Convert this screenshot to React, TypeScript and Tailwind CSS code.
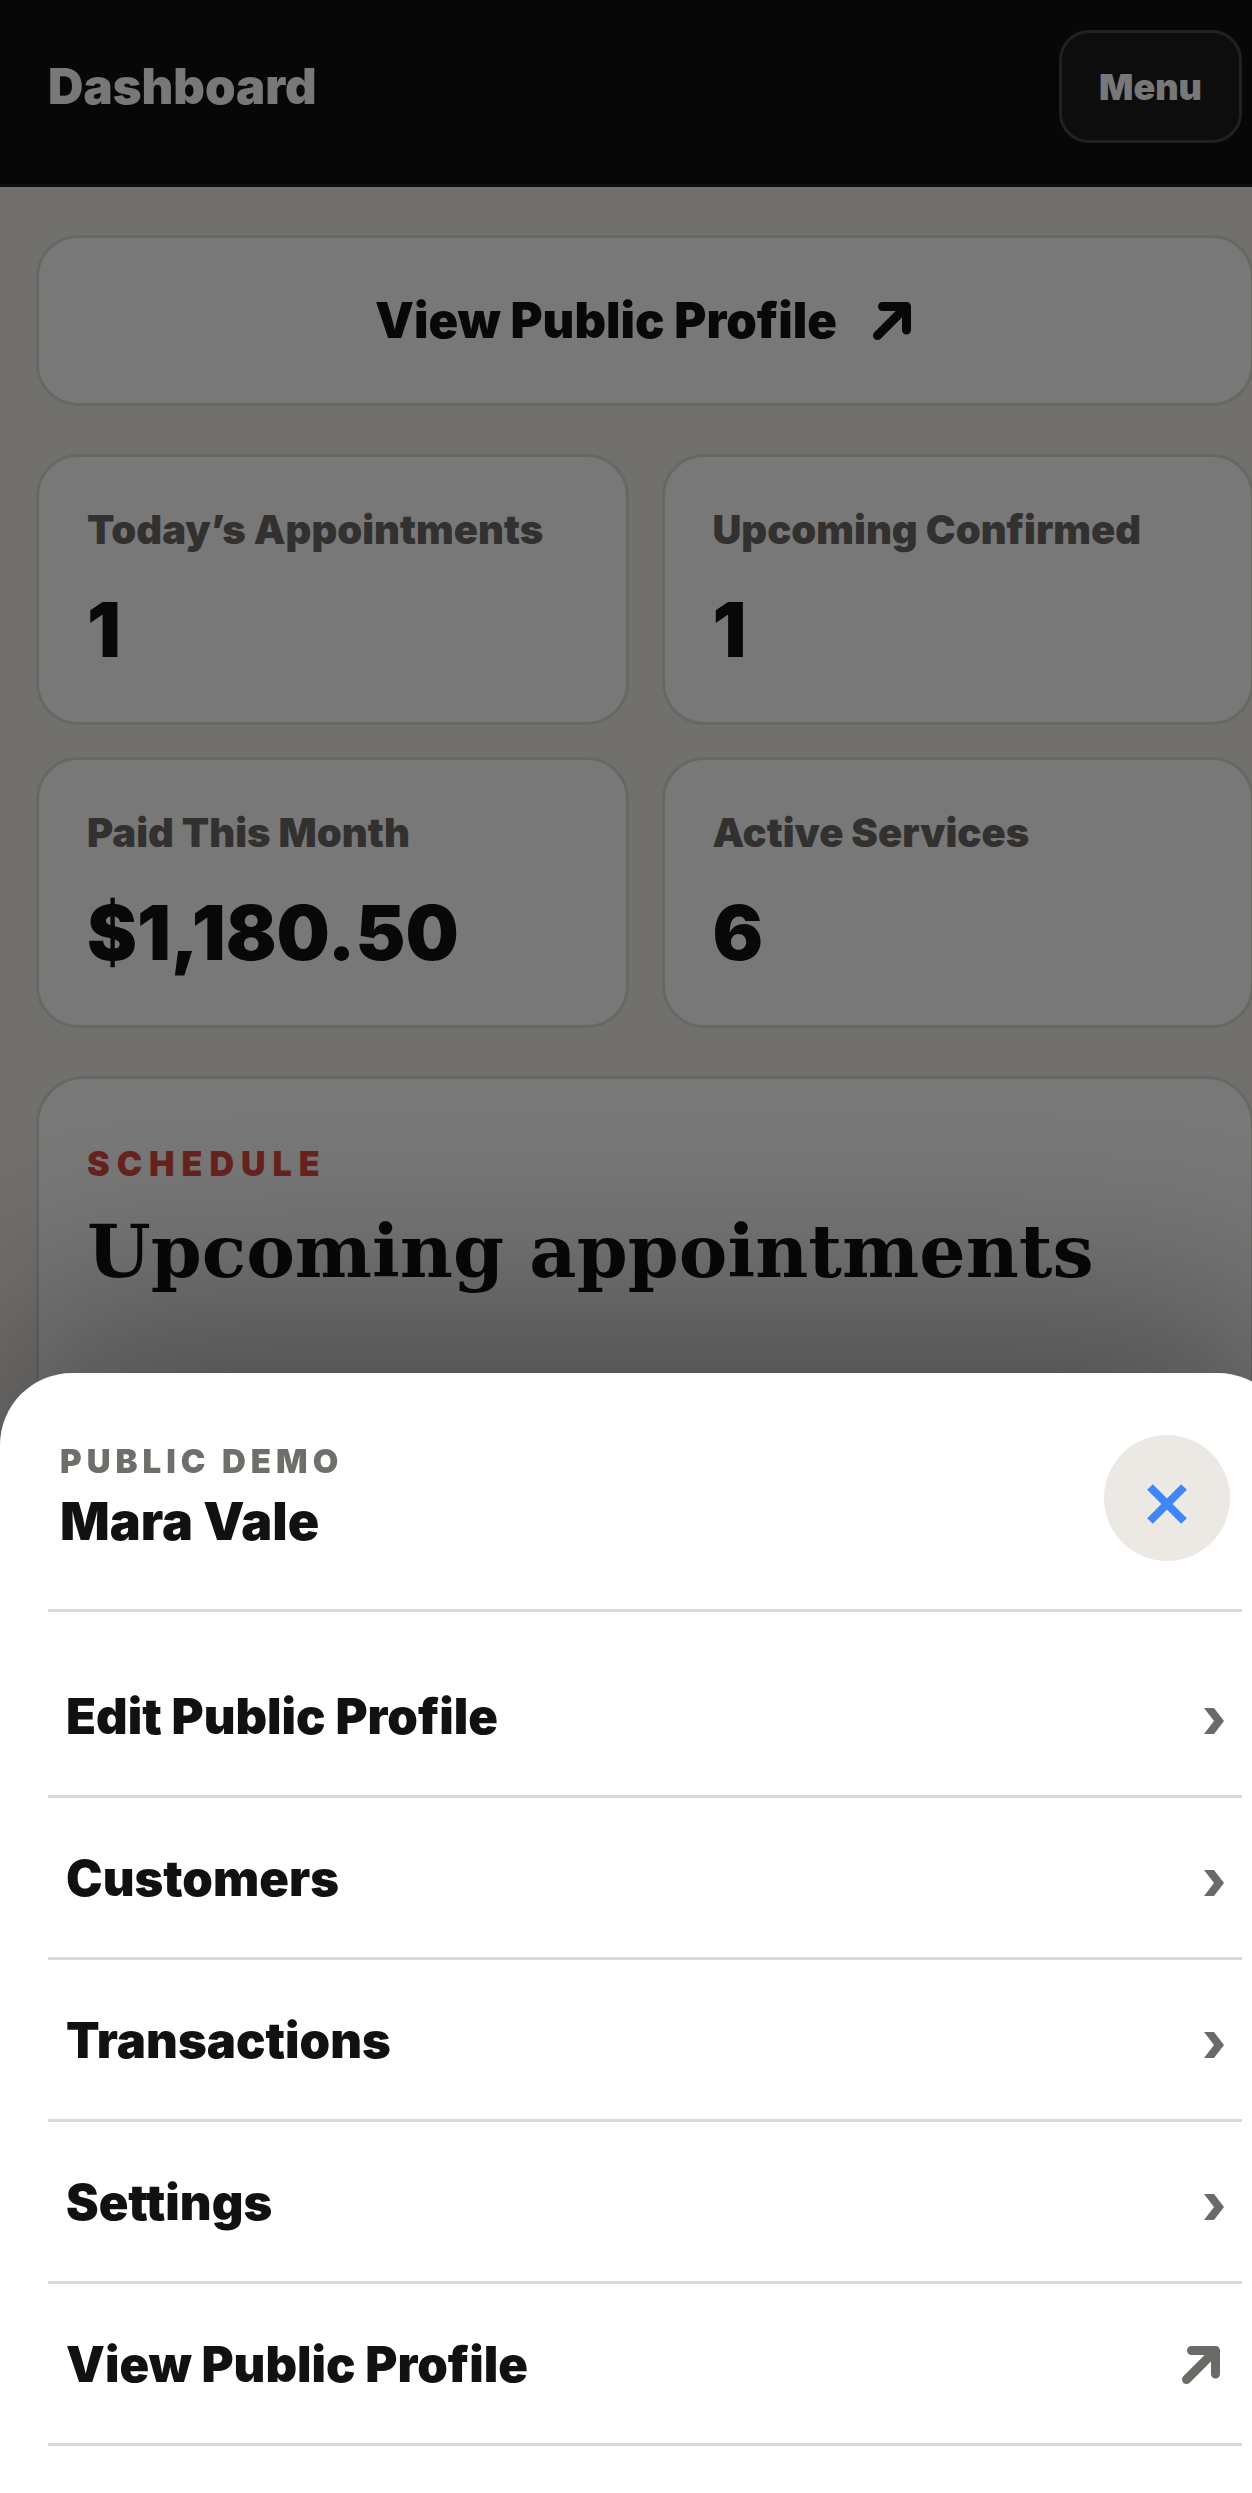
/**
 * Owner dashboard with the navigation sheet open.
 */

import { useState } from 'react';

const STATS = [
  { label: 'Today’s Appointments', value: '1' },
  { label: 'Upcoming Confirmed', value: '1' },
  { label: 'Paid This Month', value: '$1,180.50' },
  { label: 'Active Services', value: '6' },
];

const MENU_ITEMS = [
  { label: 'Edit Public Profile', external: false },
  { label: 'Customers', external: false },
  { label: 'Transactions', external: false },
  { label: 'Settings', external: false },
  { label: 'View Public Profile', external: true },
];

function ArrowUpRight() {
  return (
    <svg className="mr-1 size-[38px]" viewBox="0 0 38 38" fill="none" stroke="currentColor" strokeWidth={9} strokeLinecap="round" strokeLinejoin="round" aria-hidden="true">
      <path d="M4.5 33.5 33.5 4.5M9.5 4.5h24V28" />
    </svg>
  );
}

function ChevronRight() {
  return (
    <svg className="mt-2 h-[26px] w-5" viewBox="0 0 20 26" fill="currentColor" aria-hidden="true">
      <path d="M0 0h10l10 13-10 13H0l10-13z" />
    </svg>
  );
}

function StatCard({ label, value }: { label: string; value: string }) {
  return (
    <div className="min-h-[271px] rounded-[42px] border-3 border-[#dcdad5] bg-white px-12 pt-[49px]">
      <p className="text-[40px] leading-12 font-black text-[#6b6965]">{label}</p>
      <p className="mt-10 text-[75px] leading-[72px] font-black text-[#111111]">{value}</p>
    </div>
  );
}

function MenuSheet({ onClose }: { onClose: () => void }) {
  return (
    <div className="fixed inset-0 flex flex-col justify-end overflow-hidden bg-black/53">
      <div
        role="dialog"
        aria-label="Menu"
        className="w-[calc(100%+38px)] rounded-t-[72px] bg-white px-12 pb-[47px] shadow-[0_-72px_210px_rgba(0,0,0,0.36)]"
      >
        {/* Account */}
        <div className="flex items-start justify-between border-b-3 border-[#dadad6] px-3 pt-[62px] pb-12">
          <div className="pt-[5px]">
            <p className="text-[33px] leading-[42px] font-black tracking-[5px] text-[#6f6e6a]">PUBLIC DEMO</p>
            <p className="mt-2 text-[52px] leading-[64px] font-black text-[#111111]">Mara Vale</p>
          </div>
          <button type="button" aria-label="Close menu" onClick={onClose} className="flex size-[126px] items-center justify-center rounded-full bg-[#ece9e4] text-[#3f86f6]">
            <svg className="mt-3 size-10" viewBox="0 0 40 40" fill="none" stroke="currentColor" strokeWidth={8} aria-hidden="true">
              <path d="m3 3 34 34M37 3 3 37" />
            </svg>
          </button>
        </div>

        {/* Links */}
        <nav className="pt-6">
          {MENU_ITEMS.map((item) => (
            <a key={item.label} href="#" className="flex h-[162px] items-center justify-between border-b-3 border-[#dadad6] px-[18px] pt-0.5 text-[#6b6a66]">
              <span className="text-[49px] leading-[60px] font-black text-[#111111]">{item.label}</span>
              {item.external ? <ArrowUpRight /> : <ChevronRight />}
            </a>
          ))}
        </nav>
      </div>
    </div>
  );
}

export default function App() {
  const [menuOpen, setMenuOpen] = useState(true);

  return (
    <div className="min-h-screen overflow-hidden bg-[#f1eee8] font-['Inter','Liberation_Sans',sans-serif]">
      {/* Content runs a little past the right edge of the window */}
      <div className="w-[calc(100%+38px)]">
        <header className="flex items-center justify-between border-b-3 border-[#252525] bg-[#0f0f0f] px-12 pt-[30px] pb-[41px]">
          <h1 className="text-[49px] leading-[60px] font-black text-white">Dashboard</h1>
          <button
            type="button"
            onClick={() => setMenuOpen(true)}
            className="h-[113px] rounded-[30px] border-3 border-[#464646] bg-[#1c1c1c] px-[37px] text-[36px] font-black text-white"
          >
            Menu
          </button>
        </header>

        <main className="flex flex-col gap-12 px-9 pt-12">
          <a href="#" className="flex h-[171px] items-center justify-center gap-9 rounded-[42px] border-3 border-[#dcdad5] bg-white text-[#111111]">
            <span className="text-[49px] leading-[60px] font-black">View Public Profile</span>
            <ArrowUpRight />
          </a>

          <section className="grid grid-cols-2 gap-x-[33px] gap-y-8">
            {STATS.map((stat) => (
              <StatCard key={stat.label} label={stat.label} value={stat.value} />
            ))}
          </section>

          <section className="min-h-[600px] rounded-[48px] border-3 border-[#dcdad5] bg-white px-12 pt-[64px]">
            <p className="text-[34px] leading-[42px] font-black tracking-[7px] text-[#dc4a40]">SCHEDULE</p>
            <h2 className="mt-6 font-['DejaVu_Serif',serif] text-[73px] leading-[84px] font-bold text-[#111111]">
              Upcoming appointments
            </h2>
          </section>
        </main>
      </div>

      {menuOpen && <MenuSheet onClose={() => setMenuOpen(false)} />}
    </div>
  );
}
